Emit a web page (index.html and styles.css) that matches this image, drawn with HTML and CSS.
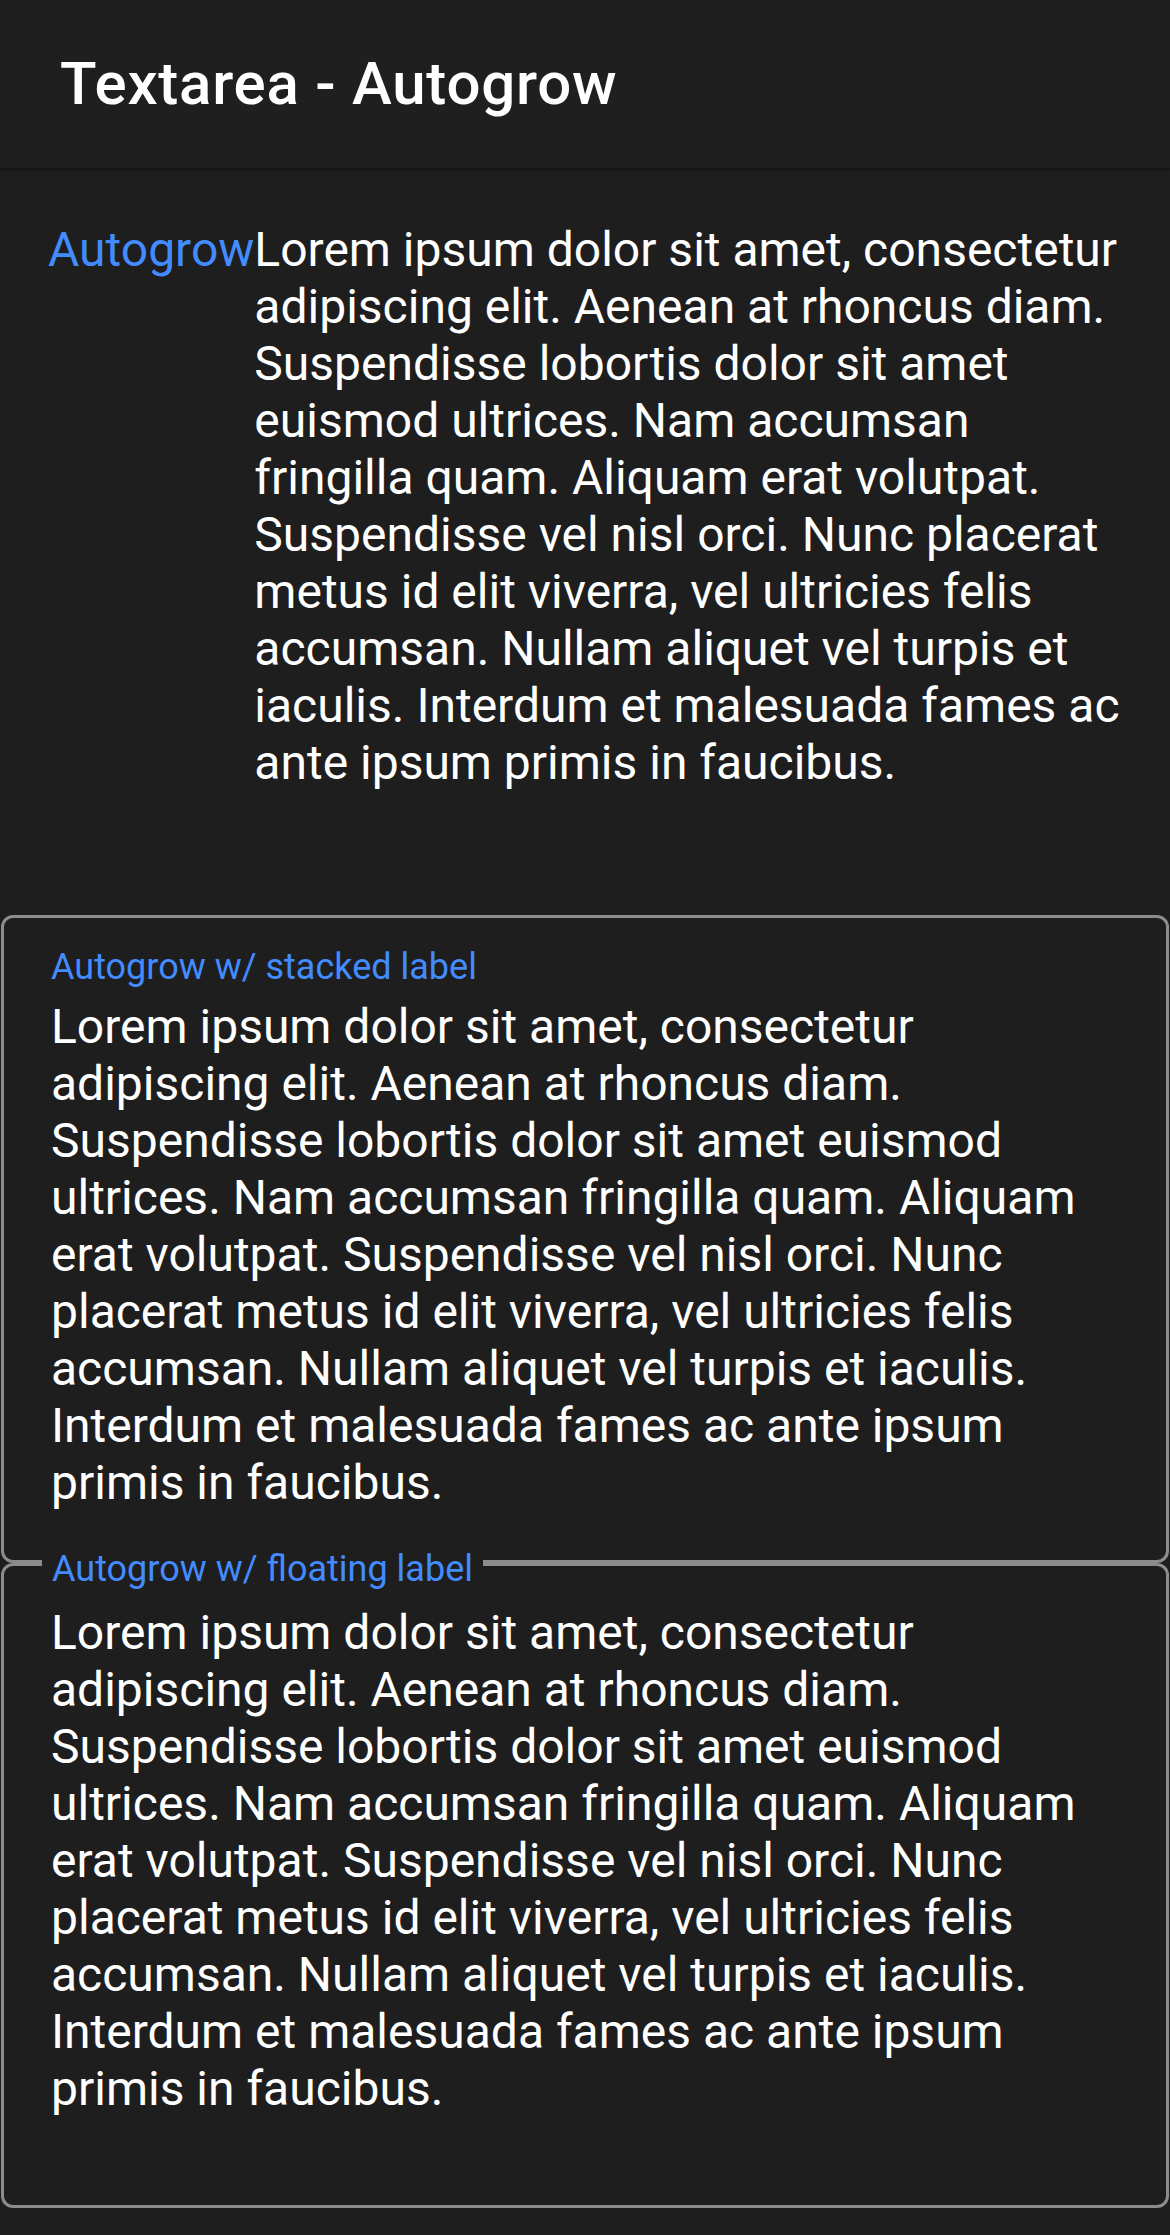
FILE: index.html
```html
<!DOCTYPE html>
<html lang="en">
<head>
<meta charset="utf-8">
<title>Textarea - Autogrow</title>
<link rel="stylesheet" href="styles.css">
</head>
<body>
<header class="toolbar">
  <h1 class="toolbar-title">Textarea - Autogrow</h1>
</header>
<main class="content">
  <div class="item item-inline">
    <label class="label-inline">Autogrow</label>
    <div class="textarea textarea-inline">Lorem ipsum dolor sit amet, consectetur adipiscing elit. Aenean at rhoncus diam. Suspendisse lobortis dolor sit amet euismod ultrices. Nam accumsan fringilla quam. Aliquam erat volutpat. Suspendisse vel nisl orci. Nunc placerat metus id elit viverra, vel ultricies felis accumsan. Nullam aliquet vel turpis et iaculis. Interdum et malesuada fames ac ante ipsum primis in faucibus.</div>
  </div>
  <div class="outline outline-stacked">
    <label class="label-stacked">Autogrow w/ stacked label</label>
    <div class="textarea">Lorem ipsum dolor sit amet, consectetur adipiscing elit. Aenean at rhoncus diam. Suspendisse lobortis dolor sit amet euismod ultrices. Nam accumsan fringilla quam. Aliquam erat volutpat. Suspendisse vel nisl orci. Nunc placerat metus id elit viverra, vel ultricies felis accumsan. Nullam aliquet vel turpis et iaculis. Interdum et malesuada fames ac ante ipsum primis in faucibus.</div>
  </div>
  <div class="outline outline-floating">
    <label class="label-floating">Autogrow w/ floating label</label>
    <div class="textarea">Lorem ipsum dolor sit amet, consectetur adipiscing elit. Aenean at rhoncus diam. Suspendisse lobortis dolor sit amet euismod ultrices. Nam accumsan fringilla quam. Aliquam erat volutpat. Suspendisse vel nisl orci. Nunc placerat metus id elit viverra, vel ultricies felis accumsan. Nullam aliquet vel turpis et iaculis. Interdum et malesuada fames ac ante ipsum primis in faucibus.</div>
  </div>
</main>
</body>
</html>
```
FILE: styles.css
```css
* { box-sizing: border-box; }
html, body {
  margin: 0;
  padding: 0;
  background: #1e1e1e;
  color: #ffffff;
  font-family: Roboto, "Noto Sans", "Liberation Sans", sans-serif;
}
body { min-height: 2235px; }

.toolbar {
  height: 168px;
  background: #1f1f1f;
  display: flex;
  align-items: center;
  padding: 0 60px;
  position: relative;
  z-index: 2;
  box-shadow: 0 2px 4px rgba(0,0,0,0.25), 0 1px 1px rgba(0,0,0,0.15);
}
.toolbar-title {
  margin: 0;
  font-size: 60px;
  font-weight: 500;
  letter-spacing: 0.0125em;
  line-height: 1;
  color: #ffffff;
}

.content {
  display: flex;
  flex-direction: column;
}

.textarea {
  font-size: 48px;
  line-height: 57px;
  color: #ffffff;
  white-space: normal;
}

.item-inline {
  display: flex;
  align-items: flex-start;
  padding: 53px 48px 124px 48px;
}
.label-inline {
  font-size: 48px;
  line-height: 57px;
  color: #428cff;
  flex: none;
}
.textarea-inline { flex: 1; }

.outline {
  position: relative;
  margin: 0 1px;
  border: 3px solid #8c8c8c;
  border-radius: 12px;
  padding-left: 47px;
  padding-right: 46px;
}
.outline-stacked {
  padding-top: 28px;
  padding-bottom: 49px;
}
.label-stacked {
  display: block;
  font-size: 36px;
  line-height: 43px;
  color: #428cff;
  margin-bottom: 9px;
}
.outline-floating {
  padding-top: 38px;
  padding-bottom: 88px;
}
.label-floating {
  position: absolute;
  top: -18px;
  left: 38px;
  padding: 0 10px;
  background: #1e1e1e;
  font-size: 36px;
  line-height: 43px;
  color: #428cff;
}
```
